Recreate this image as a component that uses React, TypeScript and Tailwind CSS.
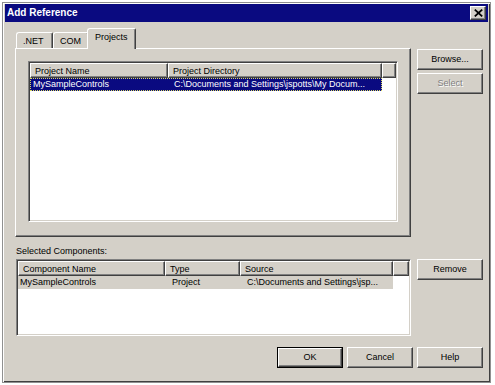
import type { ReactNode } from 'react'

const raised =
  'bg-[#d4d0c8] border border-t-white border-l-white border-r-[#404040] border-b-[#404040] shadow-[inset_-1px_-1px_0_#808080]'
const sunken =
  'bg-white border border-t-[#808080] border-l-[#808080] border-r-white border-b-white shadow-[inset_1px_1px_0_#404040,inset_-1px_-1px_0_#d4d0c8] p-[1px]'

function Button({ label, disabled, isDefault }: { label: string; disabled?: boolean; isDefault?: boolean }) {
  const face = (
    <div
      className={`${raised} flex items-center justify-center h-full w-full ${
        disabled ? 'text-[#808080] [text-shadow:1px_1px_0_#ffffff]' : 'text-black'
      }`}
    >
      {label}
    </div>
  )
  if (isDefault) {
    return <div className="w-[66px] h-[21px] border border-black">{face}</div>
  }
  return <div className="w-[66px] h-[21px]">{face}</div>
}

function HeaderCell({ label, width }: { label?: string; width?: string }) {
  return (
    <div className={`${raised} ${width ?? 'flex-1'} h-full pl-[4px] pt-px flex items-center whitespace-nowrap overflow-hidden`}>
      {label}
    </div>
  )
}

function Tab({ label, width, selected }: { label: string; width: string; selected?: boolean }) {
  if (selected) {
    return (
      <div className={`relative z-10 -ml-[2px] -mb-px h-[21px] ${width} pl-[7px] pt-[4px] bg-[#d4d0c8] border-t border-l border-white border-r border-r-[#404040] rounded-tl-[3px] rounded-tr-[2px] shadow-[inset_-1px_0_0_#808080]`}>
        {label}
      </div>
    )
  }
  return (
    <div className={`h-[16px] ${width} pl-[6px] pt-[4px] border-t border-l border-white border-r border-r-[#404040] rounded-tl-[3px] rounded-tr-[2px] shadow-[inset_-1px_0_0_#808080]`}>
      {label}
    </div>
  )
}

function ListRow({ children, className }: { children: ReactNode; className: string }) {
  return <div className={`flex h-[13px] items-center whitespace-nowrap ${className}`}>{children}</div>
}

export default function App() {
  return (
    <div className="w-[495px] h-[385px] bg-white pl-[2px] pt-[2px] font-['Liberation_Sans',Arial,sans-serif] text-[9px] leading-none text-black">
      <div className="w-[489px] h-[381px] bg-[#d4d0c8] border border-[#909090] shadow-[inset_1px_1px_0_#ffffff,inset_-1px_-1px_0_#404040] px-[2px] pt-[1px] flex flex-col">
        {/* Title bar */}
        <div className="h-[18px] bg-[#0a0a80] flex items-center justify-between pl-[2px] pr-[2px]">
          <span className="text-white font-bold text-[10px]">Add Reference</span>
          <div className={`${raised} w-[16px] h-[14px] flex items-center justify-center`}>
            <svg width="9" height="8" viewBox="0 0 9 8">
              <path d="M0.8 0.6 L8.2 7.4 M8.2 0.6 L0.8 7.4" stroke="#000" strokeWidth="1.8" />
            </svg>
          </div>
        </div>

        <div className="flex-1 pl-[10px] pr-[5px] pt-[7px] flex flex-col">
          {/* Top section */}
          <div className="flex gap-[6px] items-start">
            <div className="flex flex-col w-[396px]">
              <div className="flex items-end h-[19px] pl-[1px]">
                <Tab label=".NET" width="w-[37px]" />
                <Tab label="COM" width="w-[36px]" />
                <Tab label="Projects" width="w-[49px]" selected />
              </div>
              <div className={`${raised} h-[189px] p-[12px]`}>
                <div className={`${sunken} w-[370px] h-[161px] flex flex-col`}>
                  <div className="flex h-[15px]">
                    <HeaderCell label="Project Name" width="w-[138px]" />
                    <HeaderCell label="Project Directory" width="w-[214px]" />
                    <HeaderCell />
                  </div>
                  <ListRow className="w-[352px] bg-[#0a0a80] text-white outline outline-1 outline-dotted outline-[#d8d860] -outline-offset-1">
                    <span className="w-[138px] pl-[3px]">MySampleControls</span>
                    <span className="pl-[6px]">{'C:\\Documents and Settings\\jspotts\\My Docum...'}</span>
                  </ListRow>
                </div>
              </div>
            </div>
            <div className="flex flex-col gap-[3px] mt-[20px]">
              <Button label="Browse..." />
              <Button label="Select" disabled />
            </div>
          </div>

          {/* Selected components */}
          <div className="mt-[10px] h-[12px] pl-px">Selected Components:</div>
          <div className="flex gap-[6px] items-start">
            <div className={`${sunken} ml-px w-[395px] h-[77px] flex flex-col`}>
              <div className="flex h-[15px]">
                <HeaderCell label="Component Name" width="w-[147px]" />
                <HeaderCell label="Type" width="w-[75px]" />
                <HeaderCell label="Source" width="w-[153px]" />
                <HeaderCell />
              </div>
              <ListRow className="w-[375px] bg-[#d4d0c8]">
                <span className="w-[147px] pl-[2px]">MySampleControls</span>
                <span className="w-[75px] pl-[7px]">Project</span>
                <span className="pl-[7px]">{'C:\\Documents and Settings\\jsp...'}</span>
              </ListRow>
            </div>
            <Button label="Remove" />
          </div>

          {/* Dialog buttons */}
          <div className="mt-[11px] flex justify-end gap-[4px]">
            <Button label="OK" isDefault />
            <Button label="Cancel" />
            <Button label="Help" />
          </div>
        </div>
      </div>
    </div>
  )
}
